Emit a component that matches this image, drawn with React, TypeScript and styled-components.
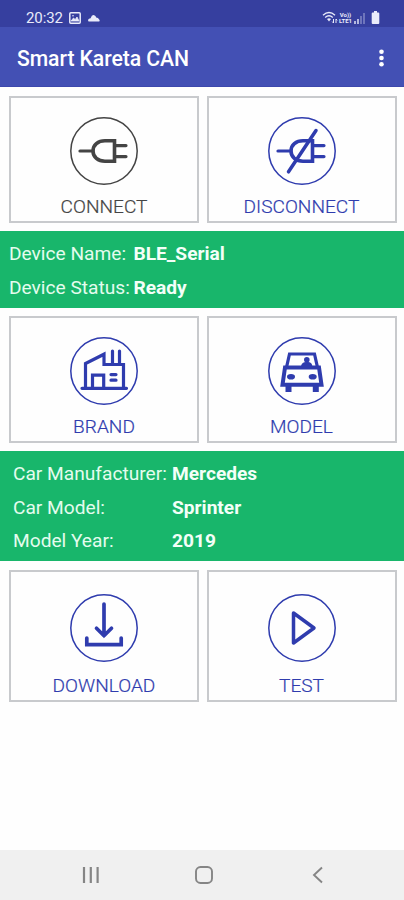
import React from "react";
import styled, { createGlobalStyle } from "styled-components";

const INDIGO = "#2f3cae";
const CHARCOAL = "#444444";

const GlobalStyle = createGlobalStyle`
  * { box-sizing: border-box; }
  body { margin: 0; background: #fff; font-family: Roboto, "Liberation Sans", sans-serif; }
`;

const Screen = styled.div`
  display: flex;
  flex-direction: column;
  width: 404px;
  height: 900px;
  background: #fefefe;
  overflow: hidden;
`;

const StatusBar = styled.header`
  display: flex;
  align-items: center;
  justify-content: space-between;
  height: 27px;
  padding: 8px 24px 0 26px;
  background: #363f9f;
  color: #e9ebfa;
`;

const StatusGroup = styled.div<{ $gap: number }>`
  display: flex;
  align-items: center;
  gap: ${(p) => p.$gap}px;
`;

const Clock = styled.span`
  font-size: 15px;
  line-height: 18px;
  letter-spacing: -0.1px;
`;

const NetworkLabel = styled.span`
  display: flex;
  flex-direction: column;
  font-size: 6px;
  font-weight: 700;
  line-height: 6px;
  text-align: center;
`;

const AppBar = styled.div`
  display: flex;
  align-items: center;
  justify-content: space-between;
  height: 60px;
  padding: 4px 19px 0 17px;
  background: #4350b4;
  border-bottom: 1px solid #3d48ac;
  color: #fff;
`;

const Title = styled.h1`
  margin: 0;
  font-size: 21.2px;
  font-weight: 500;
  line-height: 26px;
  letter-spacing: -0.08px;
  white-space: nowrap;
`;

const MenuButton = styled.button`
  display: flex;
  padding: 0 0 2px;
  border: 0;
  background: none;
`;

const TileRow = styled.div<{ $height: number }>`
  display: grid;
  grid-template-columns: 190px 190px;
  gap: 7.5px;
  height: ${(p) => p.$height}px;
  margin: 8.5px 8.5px 0 9px;
`;

const Tile = styled.button<{ $color: string; $gap: number; $top: number }>`
  display: flex;
  flex-direction: column;
  align-items: center;
  justify-content: flex-start;
  gap: ${(p) => p.$gap}px;
  padding: ${(p) => p.$top}px 0 0;
  border: 2px solid #c8cacd;
  background: #fefefe;
  color: ${(p) => p.$color};
  font-family: inherit;
`;

const TileLabel = styled.span`
  font-size: 19.1px;
  line-height: 24px;
  font-weight: 300;
  -webkit-text-stroke: 0.2px currentColor;
`;

const InfoPanel = styled.dl<{ $labelWidth: number; $inset: number }>`
  display: grid;
  grid-template-columns: ${(p) => p.$labelWidth}px 1fr;
  grid-auto-rows: 33.5px;
  align-items: center;
  margin: 8px 0 0;
  padding: 6.5px 0 3px ${(p) => p.$inset}px;
  background: #18b66b;
  color: #f3fff8;
  font-size: 19.15px;
  line-height: 24px;
  white-space: nowrap;
`;

const InfoLabel = styled.dt`
  color: #e4fcee;
`;

const InfoValue = styled.dd`
  margin: 0;
  font-weight: 700;
`;

const NavBar = styled.nav`
  display: grid;
  grid-template-columns: repeat(3, 113.5px);
  justify-content: center;
  justify-items: center;
  align-items: center;
  height: 50px;
  margin-top: auto;
  padding-left: 4px;
  background: #f0f0f0;
`;

const NavButton = styled.button`
  display: flex;
  padding: 0;
  border: 0;
  background: none;
  color: #858585;
`;

const IconSvg = styled.svg`
  display: block;
  flex: none;
  fill: none;
  stroke: currentColor;
`;

function RoundIcon({ children }: { children: React.ReactNode }) {
  return (
    <IconSvg width="70" height="70" viewBox="-35 -35 70 70" strokeWidth="3.2" strokeLinecap="round">
      <circle r="33.2" strokeWidth="1.5" />
      {children}
    </IconSvg>
  );
}

const plug = (
  <>
    <path d="M-24 0H-11" />
    <path d="M10.5 -10.2H1C-6 -10.2 -11 -6 -11 0S-6 10.2 1 10.2H10.5Z" strokeWidth="3.6" />
    <path d="M12 -5.4H22M12 5.6H22" />
  </>
);

const glyphs = {
  connect: plug,
  disconnect: (
    <>
      {plug}
      <path d="M14 -20.5L-13.5 20.8" strokeWidth="3.5" />
    </>
  ),
  brand: (
    <>
      <path d="M-18.5 17V-7.5L0 -16.8V-6.5H19.5V17" />
      <path d="M-22 17.3H22.5M8.5 -7V-20M15.5 -7V-20M-11.5 16V4.2H-.3V16" />
      <path d="M7 3.6H12M7 9.2H12" />
    </>
  ),
  model: (
    <>
      <path d="M-12.5 -17H12.5L15.5 -3.5H-15.5Z" strokeLinecap="butt" />
      <path d="M-17 -3.5H17L19.5 13.7H-19.5Z" strokeWidth="4" />
      <path d="M-13.5 14V21M13.8 14V21" strokeWidth="6" strokeLinecap="butt" />
      <ellipse cx="-11" cy="5.7" rx="4" ry="2.8" fill="currentColor" stroke="none" />
      <ellipse cx="10.7" cy="5.7" rx="4" ry="2.8" fill="currentColor" stroke="none" />
      <circle cx="4.8" cy="-11.2" r="2.8" fill="currentColor" stroke="none" />
      <path d="M-.8 -4V-5.5Q0 -8.8 4 -9H6Q9.7 -8.8 10.2 -5.5V-4Z" fill="currentColor" stroke="none" />
    </>
  ),
  download: (
    <path d="M0 -24V7.5M-7.5 .2L0 7.7L7.5 .2M-17.2 10V16.6H17.2V10" strokeWidth="3.7" />
  ),
  test: <path d="M-8.5 -15L12 0L-8.5 15Z" strokeWidth="3.5" strokeLinejoin="round" />,
};

interface ActionProps {
  glyph: keyof typeof glyphs;
  label: string;
  color?: string;
  gap?: number;
  top?: number;
}

function ActionTile({ glyph, label, color = INDIGO, gap = 9, top = 18 }: ActionProps) {
  return (
    <Tile $color={color} $gap={gap} $top={top}>
      <RoundIcon>{glyphs[glyph]}</RoundIcon>
      <TileLabel>{label}</TileLabel>
    </Tile>
  );
}

export default function App() {
  return (
    <>
      <GlobalStyle />
      <Screen>
        <StatusBar>
          <StatusGroup $gap={6}>
            <Clock>20:32</Clock>
            <IconSvg width="12" height="12" viewBox="0 0 12 12" strokeWidth="1.5">
              <rect x=".8" y=".8" width="10.4" height="10.4" rx="1" />
              <path d="M2 9L4.5 6L6.2 7.6L8 5L10 9Z" fill="currentColor" strokeWidth=".8" />
              <circle cx="4" cy="3.7" r=".8" fill="currentColor" stroke="none" />
            </IconSvg>
            <IconSvg width="13" height="10" viewBox="0 0 13 10">
              <path d="M1.5 8.5Q.2 7 2 5.7L3.6 5.2Q5 1.2 7.2 2.2Q8.7 2.6 9.2 4.6Q11 4.6 12.6 7Q13 8.5 11.8 8.5Z" fill="currentColor" stroke="none" />
            </IconSvg>
          </StatusGroup>
          <StatusGroup $gap={1}>
            <IconSvg width="16" height="13" viewBox="0 0 16 13" strokeWidth="1.4">
              <path d="M1 4.2Q7 -1 13 4.2M3.2 6.4Q7 3 10.8 6.4" />
              <path d="M5 8Q7 6.4 9 8L7 10.5Z" fill="currentColor" stroke="none" />
              <path d="M11.5 8V12M10.2 10.6L11.5 12M14 12V8L15.2 9.4" strokeWidth="1" />
            </IconSvg>
            <NetworkLabel>
              <span>Vo))</span>
              <span>LTE1</span>
            </NetworkLabel>
            <IconSvg width="12" height="12" viewBox="0 0 12 12" strokeWidth="1.4">
              <path d="M2 12V9M5 12V7" />
              <path d="M8 12V4M11 12V1" opacity=".45" />
            </IconSvg>
            <IconSvg width="14" height="13" viewBox="0 0 14 13">
              <path d="M8 1.5V0H11V1.5H12.2Q13.3 1.5 13.3 2.6V12Q13.3 13 12.3 13H6.8Q5.7 13 5.7 12V2.6Q5.7 1.5 6.8 1.5Z" fill="currentColor" stroke="none" />
            </IconSvg>
          </StatusGroup>
        </StatusBar>
        <AppBar>
          <Title>Smart Kareta CAN</Title>
          <MenuButton aria-label="More options">
            <svg width="7" height="20" viewBox="0 0 7 20" fill="#fff">
              <circle cx="3.5" cy="3.7" r="2.3" />
              <circle cx="3.5" cy="10" r="2.3" />
              <circle cx="3.5" cy="16.3" r="2.3" />
            </svg>
          </MenuButton>
        </AppBar>
        <TileRow $height={127.5}>
          <ActionTile glyph="connect" label="CONNECT" color={CHARCOAL} />
          <ActionTile glyph="disconnect" label="DISCONNECT" />
        </TileRow>
        <InfoPanel $labelWidth={124.5} $inset={9}>
          <InfoLabel>Device Name:</InfoLabel>
          <InfoValue>BLE_Serial</InfoValue>
          <InfoLabel>Device Status:</InfoLabel>
          <InfoValue>Ready</InfoValue>
        </InfoPanel>
        <TileRow $height={127}>
          <ActionTile glyph="brand" label="BRAND" />
          <ActionTile glyph="model" label="MODEL" />
        </TileRow>
        <InfoPanel $labelWidth={159} $inset={13}>
          <InfoLabel>Car Manufacturer:</InfoLabel>
          <InfoValue>Mercedes</InfoValue>
          <InfoLabel>Car Model:</InfoLabel>
          <InfoValue>Sprinter</InfoValue>
          <InfoLabel>Model Year:</InfoLabel>
          <InfoValue>2019</InfoValue>
        </InfoPanel>
        <TileRow $height={132}>
          <ActionTile glyph="download" label="DOWNLOAD" gap={11.5} top={21} />
          <ActionTile glyph="test" label="TEST" gap={11.5} top={21} />
        </TileRow>
        <NavBar>
          <NavButton aria-label="Recents">
            <IconSvg width="18" height="18" viewBox="0 0 18 18" strokeWidth="2.2">
              <path d="M2 1V17M8.8 1V17M15.6 1V17" />
            </IconSvg>
          </NavButton>
          <NavButton aria-label="Home">
            <IconSvg width="20" height="20" viewBox="0 0 20 20" strokeWidth="1.9">
              <rect x="2" y="2" width="16" height="16" rx="4.5" />
            </IconSvg>
          </NavButton>
          <NavButton aria-label="Back">
            <IconSvg width="12" height="18" viewBox="0 0 12 18" strokeWidth="1.9">
              <path d="M10 1.5L2 9L10 16.5" />
            </IconSvg>
          </NavButton>
        </NavBar>
      </Screen>
    </>
  );
}
